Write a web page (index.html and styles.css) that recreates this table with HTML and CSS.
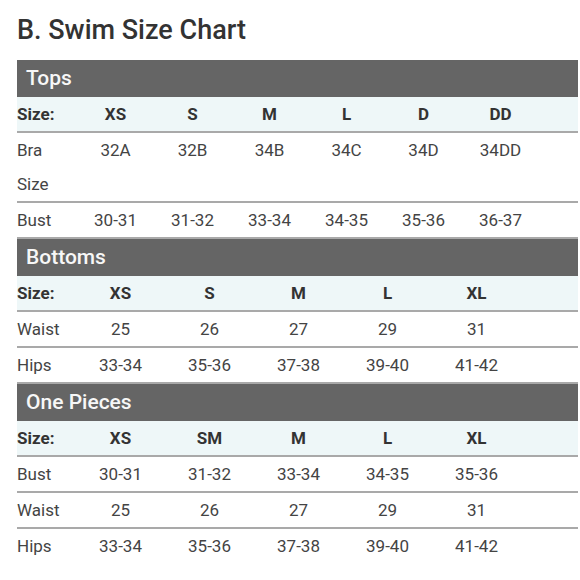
FILE: index.html
```html
<!DOCTYPE html>
<html>
<head>
<meta charset="utf-8">
<link rel="stylesheet" href="styles.css">
</head>
<body>
<div class="page">
  <h1 class="title">B. Swim Size Chart</h1>

  <div class="section tops">
    <div class="bar">Tops</div>
    <div class="row head"><span class="label">Size:</span><span>XS</span><span>S</span><span>M</span><span>L</span><span>D</span><span>DD</span></div>
    <div class="row"><span class="label">Bra Size</span><span>32A</span><span>32B</span><span>34B</span><span>34C</span><span>34D</span><span>34DD</span></div>
    <div class="row"><span class="label">Bust</span><span>30-31</span><span>31-32</span><span>33-34</span><span>34-35</span><span>35-36</span><span>36-37</span></div>
  </div>

  <div class="section five">
    <div class="bar">Bottoms</div>
    <div class="row head"><span class="label">Size:</span><span>XS</span><span>S</span><span>M</span><span>L</span><span>XL</span></div>
    <div class="row"><span class="label">Waist</span><span>25</span><span>26</span><span>27</span><span>29</span><span>31</span></div>
    <div class="row"><span class="label">Hips</span><span>33-34</span><span>35-36</span><span>37-38</span><span>39-40</span><span>41-42</span></div>
  </div>

  <div class="section five">
    <div class="bar">One Pieces</div>
    <div class="row head"><span class="label">Size:</span><span>XS</span><span>SM</span><span>M</span><span>L</span><span>XL</span></div>
    <div class="row"><span class="label">Bust</span><span>30-31</span><span>31-32</span><span>33-34</span><span>34-35</span><span>35-36</span></div>
    <div class="row"><span class="label">Waist</span><span>25</span><span>26</span><span>27</span><span>29</span><span>31</span></div>
    <div class="row last"><span class="label">Hips</span><span>33-34</span><span>35-36</span><span>37-38</span><span>39-40</span><span>41-42</span></div>
  </div>
</div>
</body>
</html>
```

FILE: styles.css
```css
html, body {
  margin: 0;
  padding: 0;
  background: #ffffff;
}

.page {
  padding: 0 2px 0 17px;
  font-family: Roboto, "Liberation Sans", sans-serif;
  color: #444444;
}

.title {
  margin: 15px 0 15px 0;
  font-size: 27px;
  line-height: 30px;
  font-weight: 500;
  color: #333333;
}

.bar {
  height: 37px;
  line-height: 37px;
  background: #656565;
  color: #f7f7f7;
  font-size: 21px;
  font-weight: 500;
  padding-left: 9px;
}

.row {
  display: grid;
  font-size: 17px;
  line-height: 34px;
  border-bottom: 2px solid #a9a9a9;
}

.row.last {
  border-bottom: none;
}

.tops .row {
  grid-template-columns: 60px repeat(6, 77px);
}

.five .row {
  grid-template-columns: 59px repeat(5, 89px);
}

.row span {
  text-align: center;
}

.row .label {
  text-align: left;
  width: min-content;
}

.row.head {
  background: #eef7f8;
  font-weight: 700;
  color: #333333;
}
```
